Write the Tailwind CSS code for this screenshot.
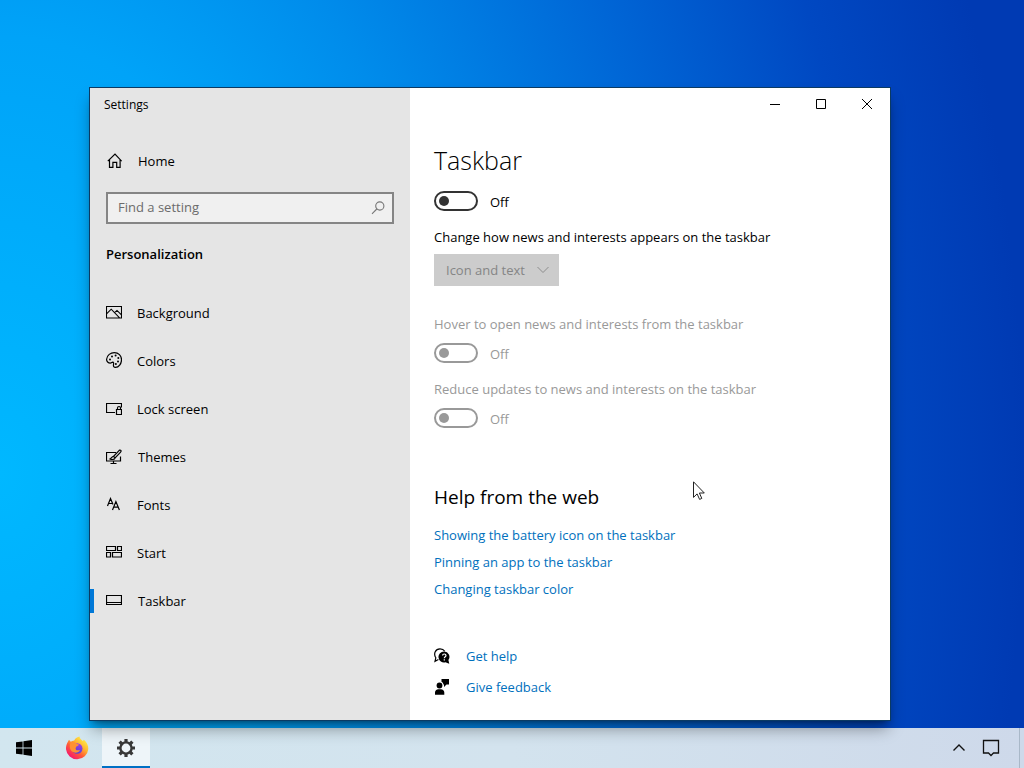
<!DOCTYPE html>
<html lang="en">
<head>
  <meta charset="UTF-8" />
  <meta name="viewport" content="width=device-width, initial-scale=1" />
  <title>Settings - Taskbar</title>
  <script src="https://cdn.jsdelivr.net/npm/@tailwindcss/browser@4"></script>
</head>
<body class="flex h-screen flex-col overflow-hidden font-['Open_Sans','Noto_Sans',sans-serif] text-[13px] leading-5 text-black">
  <!-- Desktop -->
  <main class="relative flex-1 bg-[radial-gradient(ellipse_100%_200%_at_0%_65%,#00b8ff_0%,#00a3f8_30%,#008ceb_45%,#0066d6_67%,#0048c2_85%,#003ab3_100%)]">

    <!-- Settings window -->
    <div class="absolute top-[87px] left-[89px] flex min-h-[634px] w-[802px] border border-[#0b3a63] bg-white shadow-lg shadow-black/40">
      <!-- Sidebar -->
      <aside class="w-80 bg-[#e5e5e5]">
        <h1 class="flex h-8 items-center pt-px pl-3.5 text-xs">Settings</h1>
        <a href="#home" class="mt-6 flex h-8 items-center gap-4 pt-0.5 pl-4">
          <svg class="size-4" viewBox="0 0 16 16" fill="none" stroke="currentColor" stroke-width="1.2"><path d="M1.800 8.200 9 1l6.700 7.200M3.500 6.800v7.600h3.400V9.400h3.800v5h3.400V6.800" /></svg>
          Home
        </a>
        <div class="relative mx-4 mt-4">
          <input type="search" aria-label="Find a setting" placeholder="Find a setting" class="block h-8 w-full border-2 border-[#858585] bg-[#f0f0f0] pr-8 pb-0.5 pl-2.5 placeholder:text-[#6b6b6b]" />
          <svg class="absolute top-2 right-2 size-4" viewBox="0 0 16 16" fill="none" stroke="#777" stroke-width="1.1"><circle cx="9.8" cy="6" r="4.1" /><path d="M6.8 9 2 13.8" /></svg>
        </div>
        <h2 class="mt-5 px-4 font-semibold">Personalization</h2>
        <nav class="mt-[25px]">
          <a href="#background" class="flex h-12 items-center gap-[15px] pl-4">
            <svg class="mb-0.5 size-4" viewBox="0 0 16 16" fill="none" stroke="currentColor" stroke-width="1.1"><path d="M.5 2.500h15v11.500H.5zM.8 9.600l4.400-4.400 8.400 8.600M8.600 8.600 11 6.400l4.200 4.200" /></svg>
            Background
          </a>
          <a href="#colors" class="flex h-12 items-center gap-[15px] pl-4">
            <svg class="mb-0.5 size-4" viewBox="0 0 16 16" fill="none" stroke="currentColor" stroke-width="1.2"><path d="M.6 7.2C1 3.2 4.600.6 8.300.6c4.200 0 7.200 3.200 7.200 7.100 0 4.200-2.800 7.700-6 7.700-1.700 0-2.300-1.200-2-2.700.3-1.300.2-2.400-.8-2.500-.9 0-1.100.9-2.400.9C2.300 11.100.4 9.400.6 7.200z" /><g fill="currentColor" stroke="none"><circle cx="4" cy="7.400" r="1" /><circle cx="6" cy="4.400" r="1" /><circle cx="9.600" cy="3.600" r="1" /><circle cx="12.300" cy="6" r="1" /><circle cx="12" cy="9.400" r="1" /><circle cx="9.900" cy="12" r="1" /></g></svg>
            Colors
          </a>
          <a href="#lockscreen" class="flex h-12 items-center gap-[15px] pl-4">
            <svg class="size-4" viewBox="0 0 16 16" fill="none" stroke="currentColor" stroke-width="1.200"><path d="M9 11.500H.5v-9h15v4M10.500 8.500h5v5h-5zM11.500 8.500V7a1.500 1.500 0 0 1 3 0v1.500" /></svg>
            Lock screen
          </a>
          <a href="#themes" class="flex h-12 items-center gap-4 pl-4">
            <svg class="size-4" viewBox="0 0 16 16" fill="none" stroke="currentColor" stroke-width="1.200"><path d="M10 3.500H.5v8.500h14V7.500M7.500 12v2M4.500 14.500h6M14.800 1.300c-.7-.7-1.600.1-2 .5L7.600 7.300l1.500 1.500 5.300-5.500c.4-.4 1-1.300.4-2zM7.600 7.300c-1.900.1-1.900 1.900-3.600 2.700 1.800.8 4.700.7 5.100-1.200" /></svg>
            Themes
          </a>
          <a href="#fonts" class="flex h-12 items-center gap-[15px] pl-4">
            <svg class="size-4" viewBox="0 0 16 16" fill="none" stroke="currentColor" stroke-width="1.200"><path d="M1.500 9 4.500 1.500 7 7.500M2.600 6.500h3.800M6.500 13l3.400-8.500 3.500 8.500M7.700 10.200h4.400" /></svg>
            Fonts
          </a>
          <a href="#start" class="flex h-12 items-center gap-[15px] pl-4">
            <svg class="mb-0.5 size-4" viewBox="0 0 16 16" fill="none" stroke="currentColor" stroke-width="1.200"><path d="M.5 2.500h9v4h-9zM11.500 2.500h4v4h-4zM.5 8.500h4v4.500h-4zM6.500 8.500h9v4.500h-9z" /></svg>
            Start
          </a>
          <a href="#taskbar" aria-current="page" class="flex h-12 items-center">
            <span class="mr-3 h-6 w-1 bg-[#0078d7]"></span>
            <svg class="mr-4 mb-0.5 size-4" viewBox="0 0 16 16" fill="none" stroke="currentColor" stroke-width="1.200"><path d="M.5 3.500h15v9H.5zM.5 10.500h15" /></svg>
            Taskbar
          </a>
        </nav>
      </aside>

      <!-- Page -->
      <section class="flex-1">
        <div class="flex h-8 justify-end">
          <button type="button" aria-label="Minimize" class="flex w-[46px] items-center justify-center">
            <svg class="size-2.5" viewBox="0 0 10 10" stroke="currentColor"><path d="M0 5.500h10" /></svg>
          </button>
          <button type="button" aria-label="Maximize" class="flex w-[46px] items-center justify-center">
            <svg class="size-2.5" viewBox="0 0 10 10" fill="none" stroke="currentColor"><path d="M.5.5h9v9h-9z" /></svg>
          </button>
          <button type="button" aria-label="Close" class="flex w-[46px] items-center justify-center">
            <svg class="size-2.5" viewBox="0 0 10 10" stroke="currentColor"><path d="M0 0l10 10M10 0 0 10" /></svg>
          </button>
        </div>

        <div class="px-6 pt-6">
          <h2 class="text-[25px] leading-8 font-light">Taskbar</h2>
          <label class="mt-[15px] flex h-5 items-center gap-3">
            <input type="checkbox" role="switch" class="h-5 w-11 appearance-none rounded-full border-2 border-[#333] before:mt-[3px] before:ml-[3px] before:block before:size-2.5 before:rounded-full before:bg-[#333]" />
            <span class="pt-px">Off</span>
          </label>
          <label for="appearance" class="mt-4 block">Change how news and interests appears on the taskbar</label>
          <div class="relative mt-[7px] w-[125px]">
            <select id="appearance" disabled class="block h-8 w-full appearance-none bg-[#ccc] pl-3 text-[#858585] opacity-100">
              <option>Icon and text</option>
            </select>
            <svg class="absolute top-2.5 right-2.5 size-3" viewBox="0 0 12 12" fill="none" stroke="#8c8c8c"><path d="M.5 3 6 8.500 11.500 3" /></svg>
          </div>

          <label for="hover" class="mt-7 block text-[#999]">Hover to open news and interests from the taskbar</label>
          <div class="mt-[9px] flex h-5 items-center gap-3 text-[#999]">
            <input id="hover" type="checkbox" role="switch" disabled class="h-5 w-11 appearance-none rounded-full border-2 border-[#999] before:mt-[3px] before:ml-[3px] before:block before:size-2.5 before:rounded-full before:bg-[#999]" />
            <span class="pt-px">Off</span>
          </div>
          <label for="reduce" class="mt-4 block text-[#999]">Reduce updates to news and interests on the taskbar</label>
          <div class="mt-[9px] flex h-5 items-center gap-3 text-[#999]">
            <input id="reduce" type="checkbox" role="switch" disabled class="h-5 w-11 appearance-none rounded-full border-2 border-[#999] before:mt-[3px] before:ml-[3px] before:block before:size-2.5 before:rounded-full before:bg-[#999]" />
            <span class="pt-px">Off</span>
          </div>

          <h3 class="mt-[57px] text-[19px] leading-6">Help from the web</h3>
          <ul class="mt-4 space-y-[7px] text-[#0070bd]">
            <li><a href="#battery">Showing the battery icon on the taskbar</a></li>
            <li><a href="#pinning">Pinning an app to the taskbar</a></li>
            <li><a href="#color">Changing taskbar color</a></li>
          </ul>

          <ul class="mt-[47px] space-y-[11px] text-[#0070bd]">
            <li>
              <a href="#help" class="flex items-center gap-4">
                <svg class="size-4 text-black" viewBox="0 0 16 16"><path d="M4.400 11.500 1 13.300l.8-3.500C-.8 5.500 1.500.8 6 .8c2 0 3.800.9 4.800 2.500" fill="none" stroke="currentColor" stroke-width="1.200" /><path d="M10.200 3.400a5.500 5.500 0 1 0 1.200 10.800l3.900 1.500-.9-3.600a5.500 5.500 0 0 0-4.200-8.700z" fill="currentColor" /><path d="M8.600 7.500c0-2 3.400-2 3.400 0 0 1.300-1.700 1.200-1.700 2.700M10.300 11.200v1.200" fill="none" stroke="#fff" stroke-width="1.200" /></svg>
                Get help
              </a>
            </li>
            <li>
              <a href="#feedback" class="flex items-center gap-4">
                <svg class="size-4" viewBox="0 0 16 16" fill="#000"><circle cx="5.500" cy="6.500" r="2.900" /><path d="M1 15.800v-2.300c0-2 1.500-3.300 3.300-3.300h2.600c1.900 0 3.400 1.300 3.400 3.300v2.300zM7.500 0H15v5.500h-2.500L10 8V5.500H9.400C9.200 4 8.500 3.200 7.500 2.700z" /></svg>
                Give feedback
              </a>
            </li>
          </ul>
        </div>
      </section>
    </div>

    <!-- Mouse pointer -->
    <svg class="absolute top-[481px] left-[693px] h-[19px] w-3" viewBox="0 0 12 19" fill="#fff" stroke="#222"><path d="M.5.8v15.600l3.600-3.500 2.500 5.500 2.200-1-2.400-5.400h4.900z" /></svg>
  </main>

  <!-- Windows taskbar -->
  <footer class="flex h-10 items-stretch bg-linear-to-r from-[#d2e6ef] via-[#d3e3ee] to-[#ced9ea]">
    <button type="button" aria-label="Start" class="flex w-12 items-center justify-center">
      <svg class="size-4" viewBox="0 0 16 16"><path d="M0 2.300 6.600 1.400v6.200H0zM7.400 1.300 16 0v7.600H7.400zM0 8.400h6.600v6.200L0 13.700zM7.400 8.400H16V16l-8.600-1.300z" /></svg>
    </button>
    <button type="button" aria-label="Firefox" class="ml-1 flex w-[50px] items-center justify-center">
      <svg class="size-6" viewBox="0 0 24 24">
        <defs>
          <linearGradient id="fox" x1=".85" y1=".1" x2=".2" y2=".9"><stop offset="0" stop-color="#fff04a" /><stop offset=".35" stop-color="#ffb52e" /><stop offset=".65" stop-color="#ff5a36" /><stop offset="1" stop-color="#f5196e" /></linearGradient>
          <linearGradient id="globe" x1=".7" y1="0" x2=".3" y2="1"><stop offset="0" stop-color="#a43fe0" /><stop offset="1" stop-color="#4a45d8" /></linearGradient>
        </defs>
        <path d="M2.500 6.500 4 3.800l1.700 2c1-.8 2.200-1.200 3.500-1.300C10.500 2 12.500.8 14.500.5c.2 2.300 1.700 3.200 3.400 4.500l1-1.300c2.900 2.600 4.600 5.700 4.400 9.300a11.200 11.200 0 0 1-22.300.2c-.1-2.500.5-4.800 1.500-6.700z" fill="url(#fox)" />
        <circle cx="12.200" cy="12.500" r="5.300" fill="url(#globe)" />
        <path d="M5.700 6.200c2.600-.5 4.800.2 6.200 1.800l2.100.5c-.4 1.300-1.700 1.600-2.700 1.900-.5 1.400-1 1.800-.4 3 .7 1.200 2.600.9 4.100.5-.9 2.500-4.300 3.600-6.900 2.200-3-1.600-4.300-5.700-2.400-9.900z" fill="#ff9232" />
      </svg>
    </button>
    <button type="button" aria-label="Settings" class="flex w-12 items-center justify-center border-b-2 border-[#0070c5] bg-[#eef5f9] pt-0.5">
      <svg class="size-5" viewBox="0 0 20 20" fill="none" stroke="#383838">
        <circle cx="10" cy="10" r="5.600" stroke-width="2.400" />
        <g stroke-width="3.200"><path d="M10 1v3.300M10 15.700V19M1 10h3.300M15.700 10H19M3.600 3.600l2.400 2.400M14 14l2.400 2.400M3.600 16.400 6 14M14 6l2.400-2.400" /></g>
      </svg>
    </button>
    <div class="ml-auto flex">
      <button type="button" aria-label="Show hidden icons" class="flex w-6 items-center justify-center">
        <svg class="size-3.5" viewBox="0 0 14 14" fill="none" stroke="#111" stroke-width="1.400"><path d="M1.500 9.500 7 4l5.500 5.500" /></svg>
      </button>
      <button type="button" aria-label="Notifications" class="flex w-10 items-center justify-center">
        <svg class="size-[18px]" viewBox="0 0 18 18" fill="none" stroke="#111" stroke-width="1.300"><path d="M1.500 1.500h15v12.500h-5L9 16.500 6.500 14h-5z" /></svg>
      </button>
      <button type="button" aria-label="Show desktop" class="ml-2 w-[5px] border-l border-[#a9b8c8]"></button>
    </div>
  </footer>
</body>
</html>
